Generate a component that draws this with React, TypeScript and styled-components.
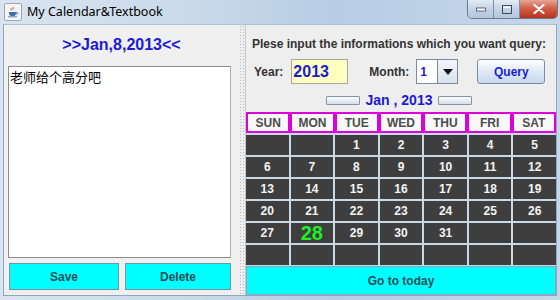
import styled, { createGlobalStyle } from 'styled-components';

const GlobalStyle = createGlobalStyle`
	html, body { margin: 0; padding: 0; background: #c4d6ea; }
	body { font-family: "Liberation Sans", Arial, sans-serif; }
`;

const Window = styled.div`
	width: 560px;
	height: 300px;
	display: flex;
	flex-direction: column;
	background: linear-gradient(90deg, #d9e4ef 0%, #c9d9ea 35%, #b7cde4 60%, #c6d7ea 100%);
	overflow: hidden;
`;

const TitleBar = styled.div`
	height: 24px;
	display: flex;
	align-items: flex-start;
	padding-left: 4px;
`;

const AppIcon = styled.div`
	width: 16px;
	height: 16px;
	margin-top: 3px;
	background: #f4f4f4;
	border: 1px solid #9aa7b6;
	border-radius: 2px;
	display: flex;
	align-items: center;
	justify-content: center;
`;

const TitleText = styled.span`
	margin-left: 5px;
	margin-top: 3px;
	font-family: "Noto Sans", "Open Sans", sans-serif;
	font-size: 12.5px;
	color: #000;
`;

const Controls = styled.div`
	margin-left: auto;
	margin-right: 2px;
	display: flex;
	height: 18px;
	border: 1px solid #6b7b90;
	border-top: none;
	border-radius: 0 0 5px 5px;
	overflow: hidden;
`;

const CtrlBtn = styled.div<{ $close?: boolean; $w: number }>`
	width: ${p => p.$w}px;
	display: flex;
	align-items: center;
	justify-content: center;
	background: ${p => p.$close
		? 'linear-gradient(#e8a593, #cf5a43 50%, #b8321e)'
		: 'linear-gradient(#e4ecf5, #c3d3e6 50%, #b2c6dd)'};
	border-left: ${p => p.$close ? '1px solid #6b7b90' : 'none'};
	& + & { border-left: 1px solid #7f8fa4; }
`;

const Body = styled.div`
	flex: 1;
	display: flex;
	margin: 0 3px 4px 3px;
	background: #eeeeee;
	border: 1px solid #8fa6bf;
	border-top-color: #aebfd2;
`;

const LeftPanel = styled.div`
	width: 236px;
	display: flex;
	flex-direction: column;
	padding: 11px 8px 4px 4px;
	box-sizing: border-box;
	background: #f0f0f0;
`;

const DateTitle = styled.div`
	text-align: center;
	font-weight: bold;
	font-size: 16px;
	color: #1b1bd2;
	height: 20px;
	padding-left: 4px;
`;

const TextArea = styled.div`
	margin-top: 10px;
	height: 192px;
	box-sizing: border-box;
	background: #fff;
	border: 1px solid #8c8c8c;
	border-right-color: #b0b0b0;
	padding: 2px 1px;
	font-family: "Noto Sans CJK SC", "Noto Sans", sans-serif;
	font-size: 13px;
	line-height: 16px;
	color: #000;
`;

const ButtonRow = styled.div`
	display: flex;
	gap: 6px;
	margin-top: 5px;
	padding-left: 1px;
`;

const CyanButton = styled.div<{ $w?: number; $h: number }>`
	${p => p.$w ? `width: ${p.$w}px;` : 'flex: 1;'}
	height: ${p => p.$h}px;
	box-sizing: border-box;
	background: #00ffff;
	border: 1px solid #6f96a6;
	display: flex;
	align-items: center;
	justify-content: center;
	font-weight: bold;
	font-size: 12px;
	color: #1f4f55;
`;

const Divider = styled.div`
	width: 6px;
	background-image: radial-gradient(#b8bcc2 0.7px, transparent 0.8px);
	background-size: 3px 3px;
	background-color: #eeeeee;
	border-right: 1px solid #c4c8cc;
`;

const RightPanel = styled.div`
	flex: 1;
	display: flex;
	flex-direction: column;
	padding: 12px 0 0 0;
	box-sizing: border-box;
`;

const Prompt = styled.div`
	font-weight: bold;
	font-size: 12px;
	color: #333;
	padding-left: 6px;
	height: 16px;
`;

const QueryRow = styled.div`
	display: flex;
	align-items: center;
	margin-top: 6px;
	height: 25px;
	padding-left: 8px;
`;

const Label = styled.span<{ $ml?: number }>`
	font-weight: bold;
	font-size: 12px;
	color: #333;
	margin-left: ${p => p.$ml ?? 0}px;
`;

const YearField = styled.div`
	width: 57px;
	height: 25px;
	box-sizing: border-box;
	margin-left: 8px;
	background: #ffffc0;
	border: 1px solid #a7a7a7;
	font-weight: bold;
	font-size: 16px;
	color: #1b1bd2;
	display: flex;
	align-items: center;
	padding-left: 1px;
`;

const Combo = styled.div`
	margin-left: 7px;
	display: flex;
	height: 25px;
	box-sizing: border-box;
	border: 1px solid #7d8a9b;
	background: #fff;
`;

const ComboValue = styled.div`
	width: 21px;
	display: flex;
	align-items: center;
	padding-left: 3px;
	box-sizing: border-box;
	font-weight: bold;
	font-size: 12px;
	color: #1b1bd2;
	border-right: 1px solid #7d8a9b;
`;

const ComboArrow = styled.div`
	width: 19px;
	display: flex;
	align-items: center;
	justify-content: center;
	background: linear-gradient(#f3f6fa, #d7e1ec);
`;

const QueryButton = styled.div`
	margin-left: 19px;
	width: 68px;
	height: 25px;
	box-sizing: border-box;
	border: 1px solid #7c8ea6;
	border-radius: 3px;
	background: linear-gradient(#ffffff, #e2ecf7 45%, #c5d8ec);
	display: flex;
	align-items: center;
	justify-content: center;
	font-weight: bold;
	font-size: 12px;
	color: #1b1bd2;
`;

const MonthRow = styled.div`
	display: flex;
	align-items: center;
	justify-content: center;
	gap: 6px;
	margin-top: 8px;
	height: 16px;
	padding-right: 4px;
`;

const SmallBtn = styled.div`
	width: 32px;
	height: 7px;
	border: 1px solid #8593a4;
	border-radius: 1px;
	background: linear-gradient(#fbfcfe, #d5e0ec);
`;

const MonthText = styled.span`
	font-weight: bold;
	font-size: 14px;
	color: #1b1bd2;
`;

const WeekHeader = styled.div`
	margin-top: 4px;
	display: grid;
	grid-template-columns: repeat(7, 1fr);
	width: 310px;
`;

const WeekCell = styled.div`
	height: 21px;
	box-sizing: border-box;
	border: 2px solid #dd00dd;
	background: #f8f8f8;
	display: flex;
	align-items: center;
	justify-content: center;
	font-weight: bold;
	font-size: 12px;
	color: #4c4c4c;
`;

const DayGrid = styled.div`
	display: grid;
	grid-template-columns: repeat(7, 1fr);
	grid-auto-rows: 20px;
	gap: 2px;
	padding: 2px 0 1px 0;
	width: 310px;
	background: #c9d9e6;
`;

const DayCell = styled.div<{ $today?: boolean }>`
	background: #3e3e3e;
	display: flex;
	align-items: center;
	justify-content: center;
	font-weight: bold;
	font-size: ${p => p.$today ? '20px' : '12px'};
	color: ${p => p.$today ? '#22ee22' : '#f4f4f4'};
`;

const TodayButton = styled(CyanButton)`
	width: 310px;
	border-color: #8aa8b8;
`;

const weekDays = ['SUN', 'MON', 'TUE', 'WED', 'THU', 'FRI', 'SAT'];

function App() {
	const cells: (number | null)[] = [];
	for (let i = 0; i < 42; i++) {
		const d = i - 1;
		cells.push(d >= 1 && d <= 31 ? d : null);
	}

	return (
		<>
			<GlobalStyle />
			<Window>
				<TitleBar>
					<AppIcon>
						<svg width="12" height="12" viewBox="0 0 12 12">
							<path d="M6 1c1 1-1 2 0 3M4 2c.8.8-.8 1.6 0 2.4" stroke="#d0402a" strokeWidth="0.9" fill="none" />
							<path d="M2 6h7v1.5c0 1.6-1.3 2.8-3.5 2.8S2 9.1 2 7.5z" fill="#3b6fb0" />
							<path d="M9 6.5h1.2c.8 0 .8 1.6 0 1.6H8.8" stroke="#3b6fb0" strokeWidth="0.8" fill="none" />
							<path d="M1 10.8h9" stroke="#3b6fb0" strokeWidth="0.8" />
						</svg>
					</AppIcon>
					<TitleText>My Calendar&amp;Textbook</TitleText>
					<Controls>
						<CtrlBtn $w={25}>
							<svg width="10" height="6" viewBox="0 0 10 6"><rect x="0.5" y="2" width="9" height="3" fill="#fff" stroke="#3d4a5c" strokeWidth="0.8" /></svg>
						</CtrlBtn>
						<CtrlBtn $w={25}>
							<svg width="10" height="9" viewBox="0 0 10 9"><rect x="0.5" y="0.5" width="9" height="8" fill="none" stroke="#3d4a5c" strokeWidth="1" /><rect x="1.5" y="1.5" width="7" height="1.5" fill="#fff" /></svg>
						</CtrlBtn>
						<CtrlBtn $w={37} $close>
							<svg width="12" height="10" viewBox="0 0 12 10"><path d="M1.5 1l9 8M10.5 1l-9 8" stroke="#fff" strokeWidth="2.2" strokeLinecap="round" /></svg>
						</CtrlBtn>
					</Controls>
				</TitleBar>
				<Body>
					<LeftPanel>
						<DateTitle>&gt;&gt;Jan,8,2013&lt;&lt;</DateTitle>
						<TextArea>老师给个高分吧</TextArea>
						<ButtonRow>
							<CyanButton $w={110} $h={27}>Save</CyanButton>
							<CyanButton $h={27}>Delete</CyanButton>
						</ButtonRow>
					</LeftPanel>
					<Divider />
					<RightPanel>
						<Prompt>Plese input the informations which you want query:</Prompt>
						<QueryRow>
							<Label>Year:</Label>
							<YearField>2013</YearField>
							<Label $ml={21}>Month:</Label>
							<Combo>
								<ComboValue>1</ComboValue>
								<ComboArrow>
									<svg width="10" height="6" viewBox="0 0 10 6"><path d="M0 0h10L5 6z" fill="#111" /></svg>
								</ComboArrow>
							</Combo>
							<QueryButton>Query</QueryButton>
						</QueryRow>
						<MonthRow>
							<SmallBtn />
							<MonthText>Jan , 2013</MonthText>
							<SmallBtn />
						</MonthRow>
						<WeekHeader>
							{weekDays.map(d => <WeekCell key={d}>{d}</WeekCell>)}
						</WeekHeader>
						<DayGrid>
							{cells.map((d, i) => (
								<DayCell key={i} $today={d === 28}>{d ?? ''}</DayCell>
							))}
						</DayGrid>
						<TodayButton $h={29}>Go to today</TodayButton>
					</RightPanel>
				</Body>
			</Window>
		</>
	);
}

export default App;
